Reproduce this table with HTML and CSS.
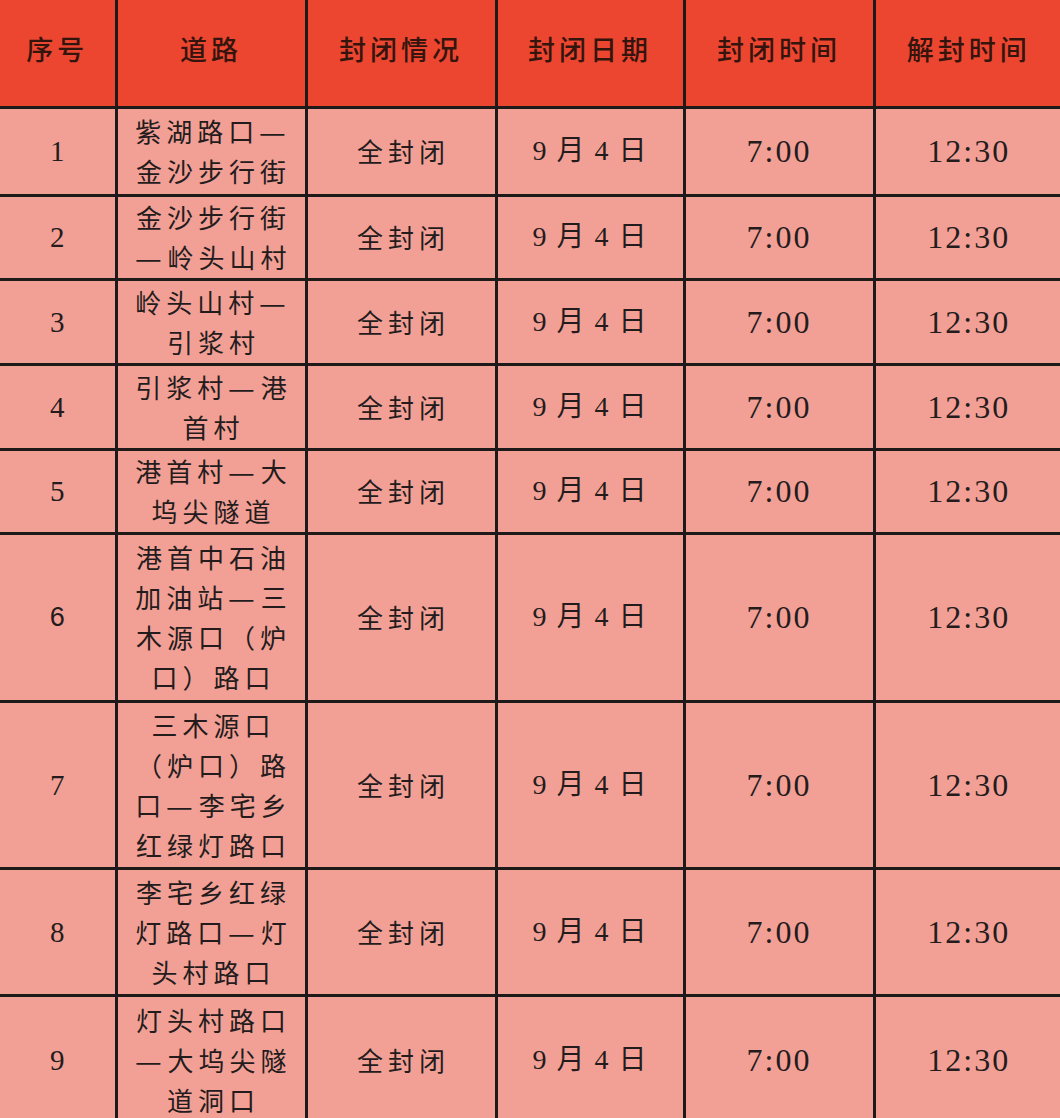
FILE: index.html
```html
<!DOCTYPE html>
<html lang="zh-CN">
<head>
<meta charset="utf-8">
<title>道路封闭情况</title>
<link rel="stylesheet" href="styles.css">
</head>
<body>
<table class="closure">
  <colgroup>
    <col class="c-no"><col class="c-road"><col class="c-state"><col class="c-date"><col class="c-start"><col class="c-end">
  </colgroup>
  <thead>
    <tr class="head">
      <th>序号</th><th>道路</th><th>封闭情况</th><th>封闭日期</th><th>封闭时间</th><th>解封时间</th>
    </tr>
  </thead>
  <tbody>
    <tr class="r2a"><td class="num">1</td><td class="road">紫湖路口<span class="dash">—</span><br>金沙步行街</td><td class="cjk">全封闭</td><td class="date">9 月 4 日</td><td class="time">7:00</td><td class="time">12:30</td></tr>
    <tr class="r2b"><td class="num">2</td><td class="road">金沙步行街<br><span class="dash">—</span>岭头山村</td><td class="cjk">全封闭</td><td class="date">9 月 4 日</td><td class="time">7:00</td><td class="time">12:30</td></tr>
    <tr class="r2c"><td class="num">3</td><td class="road">岭头山村<span class="dash">—</span><br>引浆村</td><td class="cjk">全封闭</td><td class="date">9 月 4 日</td><td class="time">7:00</td><td class="time">12:30</td></tr>
    <tr class="r2c"><td class="num">4</td><td class="road">引浆村<span class="dash">—</span>港<br>首村</td><td class="cjk">全封闭</td><td class="date">9 月 4 日</td><td class="time">7:00</td><td class="time">12:30</td></tr>
    <tr class="r2b"><td class="num">5</td><td class="road">港首村<span class="dash">—</span>大<br>坞尖隧道</td><td class="cjk">全封闭</td><td class="date">9 月 4 日</td><td class="time">7:00</td><td class="time">12:30</td></tr>
    <tr class="r4a"><td class="num sans">6</td><td class="road">港首中石油<br>加油站<span class="dash">—</span>三<br>木源口（炉<br>口）路口</td><td class="cjk">全封闭</td><td class="date">9 月 4 日</td><td class="time">7:00</td><td class="time">12:30</td></tr>
    <tr class="r4b"><td class="num">7</td><td class="road">三木源口<br>（炉口）路<br>口<span class="dash">—</span>李宅乡<br>红绿灯路口</td><td class="cjk">全封闭</td><td class="date">9 月 4 日</td><td class="time">7:00</td><td class="time">12:30</td></tr>
    <tr class="r3a"><td class="num">8</td><td class="road">李宅乡红绿<br>灯路口<span class="dash">—</span>灯<br>头村路口</td><td class="cjk">全封闭</td><td class="date">9 月 4 日</td><td class="time">7:00</td><td class="time">12:30</td></tr>
    <tr class="r3b"><td class="num">9</td><td class="road">灯头村路口<br><span class="dash">—</span>大坞尖隧<br>道洞口</td><td class="cjk">全封闭</td><td class="date">9 月 4 日</td><td class="time">7:00</td><td class="time">12:30</td></tr>
  </tbody>
</table>
</body>
</html>
```

FILE: styles.css
```css
html, body {
  margin: 0;
  padding: 0;
  background: #f2a096;
  overflow: hidden;
}

.closure {
  border-collapse: collapse;
  table-layout: fixed;
  width: 1062px;
  font-family: "Liberation Serif", "Noto Sans CJK SC", serif;
  color: #241c1c;
}

.c-no { width: 116px; }
.c-road { width: 190px; }
.c-state { width: 190px; }
.c-date { width: 188px; }
.c-start { width: 190px; }
.c-end { width: 188px; }

.closure th,
.closure td {
  border: 3px solid #1e1a1a;
  text-align: center;
  vertical-align: middle;
  padding: 0;
}

.closure tr:first-child th { border-top: none; }
.closure th:first-child,
.closure td:first-child { border-left: none; }
.closure th:last-child,
.closure td:last-child { border-right: none; }

.head th {
  background: #ec4530;
  height: 107px;
  font-family: "Noto Sans CJK SC", sans-serif;
  font-weight: 500;
  font-size: 27px;
  letter-spacing: 4px;
  color: #34150e;
  padding-bottom: 8px;
  box-sizing: border-box;
}

.closure td {
  background: #f2a096;
  line-height: 40px;
}

.num {
  font-size: 29px;
}
.num.sans {
  font-family: "Liberation Sans", sans-serif;
  font-size: 27px;
}

.road {
  font-family: "Noto Sans CJK SC", sans-serif;
  font-size: 26px;
  letter-spacing: 5px;
  padding-left: 5px !important;
  line-height: 42px;
}

.r2a .road,
.r2b .road,
.r2c .road {
  line-height: 40px;
}

.dash {
  display: inline-block;
  margin: 0 2px;
  transform: scaleX(1.15);
}

.cjk {
  font-family: "Noto Sans CJK SC", sans-serif;
  font-size: 26px;
  letter-spacing: 5px;
  padding-left: 5px !important;
}

.date {
  font-family: "Liberation Serif", "Noto Sans CJK SC", serif;
  font-size: 28px;
  letter-spacing: 1px;
  word-spacing: 1px;
}

.time {
  font-size: 32px;
  letter-spacing: 2px;
}

.r2a td { height: 85px; }
.r2b td { height: 81px; }
.r2c td { height: 82px; }
.r4a td { height: 165px; }
.r4b td { height: 164px; }
.r3a td { height: 124px; }
.r3b td { height: 126px; }
```
